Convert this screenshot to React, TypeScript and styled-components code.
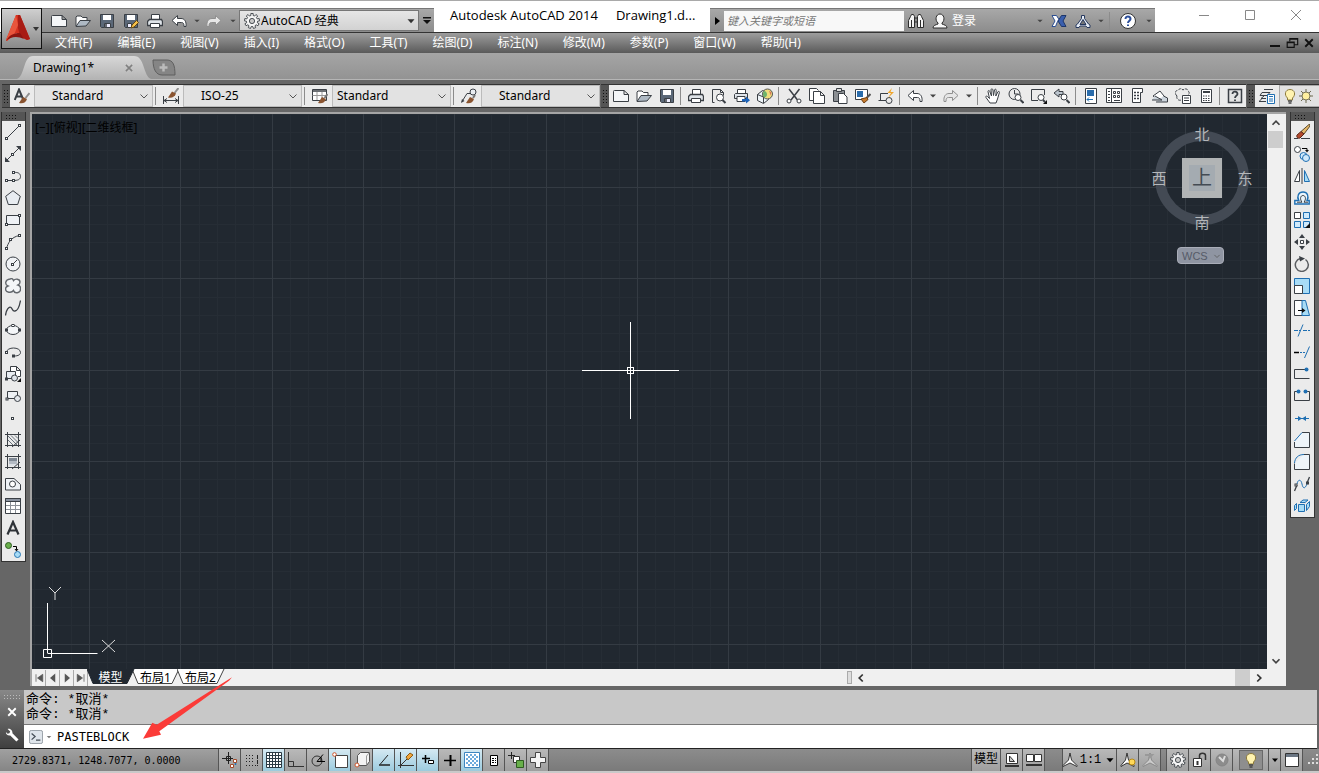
import React from 'react';
import styled, { createGlobalStyle, css } from 'styled-components';

const ui = '"Noto Sans", "Noto Sans CJK SC", sans-serif';
const mono = '"Liberation Mono", "Noto Sans CJK SC", monospace';

const GlobalStyle = createGlobalStyle`
  * { box-sizing: border-box; }
  body { margin: 0; background: #666; font: 12px/16px ${ui}; color: #000; overflow: hidden; }
  button, select, input { font: inherit; color: inherit; margin: 0; padding: 0; border: 0; background: none; border-radius: 0; }
  svg { display: block; flex: none; }
`;

/* ---------- glyphs ---------- */

const K = '#3a3f45';
const B = '#1f6fb2';

const Sq = ({ x, y, c = K }: { x: number; y: number; c?: string }) => (
  <rect x={x - 1} y={y - 1} width="2" height="2" fill="#fff" stroke={c} />
);

const undoPath = 'M6.5 2.500L1 7.500l5.500 5V9.500h4c1.800 0 2.500 1 2.500 4h2c.6-5-1.500-8-5-8H6.500z';
const redoPath = 'M9.500 2.500L15 7.500l-5.500 5V9.500h-4C3.700 9.500 3 10.500 3 13.500H1c-.6-5 1.500-8 5-8h3.500z';

/* Outline of a cog: each tooth contributes two outer and two inner points. */
const gearPoints = Array.from({ length: 9 }, (_, i) => {
  const step = (Math.PI * 2) / 9;
  return [[-0.22, 7.6], [0.22, 7.6], [0.3, 5.6], [0.7, 5.6]]
    .map(([t, r]) => {
      const a = (i + t) * step - Math.PI / 2;
      return `${(8 + r * Math.cos(a)).toFixed(2)},${(8 + r * Math.sin(a)).toFixed(2)}`;
    })
    .join(' ');
}).join(' ');

const glyphs: Record<string, React.ReactNode> = {
  new: <path d="M.5 3.500c0-1 .5-1 1-1H11l4.500 4v7H.5zM11 2.500v4h4.500" fill="#f4f6f8" stroke={K} />,
  open: <><path d="M1 13V4l1-1h4l1.500 1.500H12V7" fill="#fff" stroke={K} /><path d="M1 13.500L5 7.500h10.500L11 13z" fill="#aeb9c4" stroke={K} /></>,
  save: <><path d="M1.500 1.500h13v13h-12l-1-1z" fill="#5b6878" stroke={K} /><path d="M4 2h8v5H4z" fill="#fff" /><path d="M5.500 10.500h6v4h-6z" fill="#eef" stroke={K} /><path d="M7 11v3" stroke={K} strokeWidth="1.500" /></>,
  saveas: <><path d="M1.500 1.500h13v13h-12l-1-1z" fill="#5b6878" stroke={K} /><path d="M4 2h8v5H4z" fill="#fff" /><path d="M4.500 10.500h4v4h-4z" fill="#eef" stroke={K} /><path d="M8 15l1-3 4.500-4.500 2 2L11 14z" fill="#f5c04a" stroke="#6b4b12" /></>,
  print: <><path d="M4.500 6.500V1.500h8v5" fill="#fff" stroke={K} /><path d="M2.500 6.500h12l1 2v4h-15v-4z" fill="#dfe4e9" stroke={K} strokeWidth="1.300" /><path d="M3.500 10.500h9v4h-9z" fill="#fff" stroke={K} /></>,
  preview: <><path d="M3.500 14.500h-2v-13h8l3 3v3M9.500 1.500v3h3" fill="none" stroke={K} /><circle cx="9" cy="9.500" r="3.500" fill="#fff" stroke={K} /><path d="M11.500 12l3 3" stroke={K} strokeWidth="2" /></>,
  publish: <><path d="M3.500 5.500V1.500h8v4" fill="#fff" stroke={K} /><path d="M1.500 5.500h12v5h-13v-4z" fill="#dfe4e9" stroke={K} /><path d="M3 8.500h8v5H3z" fill="#fff" stroke={K} /><path d="M8 11h4V8.500l4 3.700-4 3.300V13.500H8z" fill="#1d63b8" /></>,
  dwf: <><path d="M.5 6.500l5-4 6 2v7l-5 4-6-3z" fill="#eef4f8" stroke={K} /><path d="M.5 6.500l6 2.500v6" fill="none" stroke={K} /><circle cx="10.500" cy="6" r="5" fill="#efdc7c" stroke="#555" /><path d="M7 3c2 0 3 2 3 3.500S9 9 7.500 9.500C5.500 8 5.500 5 7 3z" fill="#6db36c" /><path d="M12 2.500l2.500 2-1 3z" fill="#d9795a" /></>,
  cut: <><path d="M3 1l8.500 11M13.500 1L5 12" stroke={K} strokeWidth="1.500" /><circle cx="3" cy="13" r="2" fill="#fff" stroke={K} /><circle cx="13" cy="13" r="2" fill="#fff" stroke={K} /></>,
  copy: <><path d="M4 12.500H.5v-12h7l2 2" fill="#fff" stroke={K} /><path d="M4.500 3.500h7l4 4v8h-11zM11.500 3.500v4h4" fill="#fff" stroke={K} /></>,
  paste: <><path d="M1.500 2.500h11v11h-11z" fill="#8b8f93" stroke={K} /><path d="M4.500.500h5v3h-5z" fill="#ddd" stroke={K} /><path d="M6.500 5.500h5l3.500 3.500v6.500H6.500z" fill="#fff" stroke={K} /></>,
  match: <><path d="M.5 1.500h12v10H.5z" fill="#fff" stroke={K} /><path d="M2 3h6v6H2z" fill="#2a6cab" /><path d="M15.500 6l-4 4" stroke="#555" strokeWidth="2" /><path d="M6 11l6-1.500 1 2L9 15z" fill="#c67a2c" stroke="#6d3d10" /></>,
  blockedit: <><path d="M10 5.500H2.500v7H8M.5 12.500h4" fill="none" stroke={K} /><circle cx="11" cy="12.500" r="3" fill="none" stroke={K} /><path d="M14 0L9.500 5H13l-3 5 6-6h-3.500z" fill="#f0a52b" /></>,
  undo: <path d={undoPath} fill="#fff" stroke={K} />,
  redo: <path d={redoPath} fill="#e6e6e6" stroke="#8f8f8f" />,
  hand: <path d="M5 15L1 9.500c-.5-1.500.8-2 1.500-1l2 2L3 3.500c0-1.300 1.500-1.300 1.800 0L6.500 8 6 1.800C6 .5 7.700.5 7.900 1.800L8.500 7.500 9.500 2c.3-1.200 1.900-1 1.700.3L10.800 8l2-4c.6-1.200 2-.6 1.600.6L12.500 11l-1.500 4z" fill="#fff" stroke={K} />,
  zoomrt: <><circle cx="6.500" cy="6" r="5.500" fill="none" stroke={K} /><path d="M6.500 2v4h4" fill="none" stroke={K} /><circle cx="10" cy="9.500" r="3" fill="#fff" stroke={K} /><path d="M12.500 12l3 3" stroke={K} strokeWidth="2" /></>,
  zoomwin: <><path d="M7 12.500H.5v-11h13V7" fill="none" stroke={K} /><circle cx="10" cy="9.500" r="3" fill="#fff" stroke={K} /><path d="M12 12l2 2" stroke={K} strokeWidth="2" /><path d="M16 12v4h-4z" /></>,
  zoomprev: <><path d="M5 1L0 5l5 4V6.500h4v-3H5z" fill="#bcc5ce" stroke={K} /><circle cx="10" cy="9" r="3" fill="#fff" stroke={K} /><path d="M12.500 12l3 3" stroke={K} strokeWidth="2" /></>,
  props: <><path d="M2.500.500h11v15h-11z" fill="#fff" stroke={K} /><path d="M4 2h7v6H4z" fill="#2a6cab" /><path d="M4 11.500h6M6 9.500l-2 2 2 2" stroke={B} fill="none" /></>,
  dcenter: <><path d="M.5.500h15v14H.5zM5.500.500v14" fill="#fff" stroke={K} /><path d="M2 3.500h2M2 6.500h2M2 9.500h2M2 12.500h2" stroke={K} /><path d="M7.500 3.500h2v2h-2zM11.500 3.500h2v2h-2zM7.500 7.500h2v2h-2zM11.500 7.500h2v2h-2zM8 12.500h6" stroke={K} fill="none" /></>,
  palettes: <><path d="M3.500.500h10v4h-2v10h-8z" fill="#fff" stroke={K} /><path d="M5 4.500h5M5 7.500h5M5 10.500h5" stroke={K} strokeDasharray="2 1" strokeWidth="1.500" /></>,
  sheets: <><path d="M1 8l7-5 4 5 3 3H5z" fill="#fff" stroke={K} /><path d="M0 12h10l-7-4M4 14h11.500v-4l-4-2" fill="#ccd4dc" stroke={K} /></>,
  markup: <><path d="M2 8C-.5 6 0 2 3 2.500 5-.5 7 1 8 2c2-2 5-1 5 1 2 1 1 4 0 4M2 8c-1 3 2 5 4 4" fill="none" stroke={K} strokeDasharray="3 1" /><path d="M7.500 7.500h8v8h-8zM9 10h5M9 12.500h5" fill="#fff" stroke={K} /></>,
  calc: <><path d="M3.500 1.500h10v13h-10z" fill="#fff" stroke={K} /><path d="M5 4h7" stroke={K} strokeWidth="2" /><path d="M5 8h7M5 10.500h7M5 12.500h7" stroke={K} strokeDasharray="1.500 1" /></>,
  helpbox: <><path d="M1.500 1.500h13v13h-13z" fill="#e4e4e4" stroke={K} strokeWidth="1.500" /><path d="M5.500 6c0-3.500 5-3 5 0 0 1.500-2.500 2-2.500 4M8 11.500v1.500" fill="none" stroke={K} strokeWidth="1.800" /></>,
  layers: <><path d="M5 1.500h9M3 4.500h8L8 7.500H1zM2 10.500h5M0 13.500h7M2 10.500L5 8M0 13.500L2.500 11" fill="none" stroke={K} /><path d="M8.500 6.500h7v9h-7z" fill="#fff" stroke={B} /><path d="M10 8.500h4M10 11h4M10 13h4" stroke={B} /></>,
  bulb: <><path d="M5.500 10C2 7 3 1.500 8 1.500S14 7 10.500 10v2h-5z" fill="#fff3b0" stroke="#8c7a3a" /><path d="M6 13h4M6.500 15h3" stroke="#444" strokeWidth="1.500" /></>,
  sun: <><path d="M8 1v14M1 8h14M3 3l10 10M13 3L3 13" stroke="#6c6a50" /><circle cx="8" cy="8" r="4" fill="#fff0a0" stroke="#77745a" /></>,
  textstyle: <><path d="M.8 12L5 1.500 9 11M2.500 8.500h5" fill="none" stroke={K} strokeWidth="2" /><path d="M15.500 5l-4 5" stroke="#8f8f8f" strokeWidth="2" /><path d="M5 15l4-6 4 2c-1 3.500-4 5-8 4z" fill="#8a5430" /></>,
  dimstyle: <><path d="M.5 8v8M15.500 8v8M1 12.500h14M4 10.500l-3 2 3 2M12 10.500l3 2-3 2" stroke={K} fill="none" /><path d="M15.500 0l-4 5" stroke="#8f8f8f" strokeWidth="2" /><path d="M5 9.500l4-6 4 2c-1 3-4 5-8 4z" fill="#8a5430" /></>,
  tablestyle: <><path d="M.5 1.500h14v11H.5z" fill="#fff" stroke={K} /><path d="M.5 3h14" stroke={K} strokeWidth="1.500" /><path d="M.5 7.500h14M5 4v8M10 4v8" stroke="#999" /><path d="M15.500 6l-3 4" stroke="#777" strokeWidth="2" /><path d="M6 15l4-6 4 2c-1 3.500-4 5-8 4z" fill="#8a5430" /></>,
  mleader: <><path d="M1 13.500L6 5.500h3" stroke={K} fill="none" /><path d="M0 15l1-4 2.500 2z" fill={K} /><circle cx="12" cy="4" r="3" fill="#e9edf1" stroke={K} /><path d="M14 7l-2 3" stroke="#777" strokeWidth="2" /><path d="M5 15l4-6 4 2c-1 3.500-4 5-8 4z" fill="#8a5430" /></>,
  gear: <><polygon points={gearPoints} fill="#f5f5f5" stroke={K} strokeWidth=".9" /><circle cx="8" cy="8" r="2.600" fill="#c9c9c9" stroke={K} strokeWidth=".9" /></>,
  binoc: <><path d="M.5 14.500V7.500l2-4 1-2h2l1 2v11zM9.500 14.500v-11l1-2h2l1 2 2 4v7z" fill="#f4f4f4" stroke="#2c2c2c" /><path d="M6.500 5h3v4h-3z" fill="#888" stroke="#2c2c2c" /><path d="M3.500 7v7M12.500 7v7" stroke="#2c2c2c" /></>,
  user: <path d="M1 15c0-3 3-3 5-4v-1C2.500 7 4 1 8 1s5.500 6 2 9v1c2 1 5 1 5 4z" fill="#f7f7f7" stroke="#2c2c2c" />,
  exchange: <><path d="M1 2.500h4.500L8 6.500l-1.500 2-2 5H1L4 8z" fill="#fff" stroke="#2d4f92" /><path d="M15 2.500h-4.500L7 8l3.500 5.500H15L12 8z" fill="#3a5fae" stroke="#1d3669" /></>,
  a360: <><path d="M6.500 2.500h3v3l4 5.500 1.500 1v2.500h-3L11 13H5l-1 1.500H1V12l1.500-1 4-5.500z" fill="#e8eef7" stroke="#26385e" /><path d="M8 6.500L5 11.500h6z" fill="#777" stroke="#26385e" /></>,
  helpround: <><circle cx="8" cy="8" r="7.500" fill="#fff" stroke="#333" /><path d="M5.500 6c0-3.500 5-3 5 0 0 1.500-2.500 2-2.500 4M8 11.500v1.500" fill="none" stroke="#2c4f9b" strokeWidth="2" /></>,

  line: <><path d="M2 14L14 2" stroke={K} /><Sq x={1.5} y={14.5} /><Sq x={14.5} y={1.5} /></>,
  xline: <><path d="M1 15L15 1" stroke={K} /><path d="M0 16v-5l5 5zM16 0v5l-5-5z" fill={K} /><Sq x={7.5} y={8.5} /></>,
  pline: <><path d="M9 4.500c4-.5 6.500 1 6.500 4S13 12.500 8 12.500H2" fill="none" stroke={K} /><Sq x={1.5} y={12.5} /><Sq x={8.5} y={12.5} /><Sq x={8.5} y={4.5} /></>,
  polygon: <path d="M8 .7l7.300 5.600-2.600 8.200H3.300L.7 6.300z" fill="#e8ecf1" stroke={K} />,
  rect: <><path d="M1.500 3.500h13v9h-13z" fill="#eef1f5" stroke={K} /><Sq x={1.5} y={12.5} /><Sq x={14.5} y={3.5} /></>,
  arc: <><path d="M1.500 14.500C3 9 6 3 14.500 1.500" fill="none" stroke={K} /><Sq x={1.5} y={14.5} /><Sq x={5.5} y={5.5} /><Sq x={14.5} y={1.5} /></>,
  circle: <><circle cx="8" cy="8" r="7" fill="#f0f2f5" stroke={K} /><path d="M8 8l4-4" stroke={K} /><Sq x={7.5} y={8.5} /></>,
  cloud: <path d="M5 1c2-1 3 0 3.500 1.500C10 .5 15 .5 15 4c0 1.500-1 2.500-2 3 3.500 1 3.500 6.500 0 7.500-2.500.8-4-.5-4.500-2C6.500 15.500.5 14.500.5 11 .5 9.500 1.500 8.500 3 8-.5 6.500 0 1.500 5 1z" fill="#f4f6f8" stroke="#63676c" strokeWidth="1.400" />,
  spline: <path d="M.5 15.500C1 10 4 6 6 7.500s1 4 4 3.500 4.500-5 5.500-10.500" fill="none" stroke={K} strokeWidth="1.300" />,
  ellipse: <><ellipse cx="8" cy="8" rx="6.500" ry="4.500" fill="#f4f6f8" stroke={K} /><Sq x={1.5} y={8} /><Sq x={14.5} y={8} /><Sq x={8} y={3.5} /></>,
  earc: <><path d="M1.500 8.500c0-6 14-6 14 0 0 2-2 3.500-6.500 3.500" fill="none" stroke={K} /><Sq x={1.5} y={8.5} /><Sq x={8.5} y={12} /></>,
  insert: <><path d="M5.500 5V.500h6l4 4v6H13M11.500.500v4h4" fill="#fff" stroke={K} /><path d="M1.500 5.500h9v7h-9z" fill="#e8ecf1" stroke={K} /><circle cx="9.500" cy="12" r="3" fill="#dfe4ea" stroke={K} /><path d="M16 12v4h-4z" /><Sq x={1.5} y={13} /></>,
  block: <><path d="M2.500 3.500h10v7h-10z" fill="#eef1f5" stroke={K} /><circle cx="12.500" cy="10.500" r="3" fill="#e4e8ed" stroke={K} /><Sq x={2} y={11} /></>,
  point: <Sq x={7.5} y={8.5} />,
  hatch: <><path d="M2.500 0v15M13.500 0v15M0 2.500h16M0 13.500h16" stroke={K} /><path d="M3 4l9 9M6 3.500l7 7M3 8l5 5M10 3.500l3 3" stroke="#66707b" /><path d="M7 15l8-7" stroke={K} /></>,
  gradient: <><path d="M2.500 0v15M13.500 0v15M0 2.500h16M0 13.500h16" stroke={K} /><path d="M4 4h8v3H4z" fill="#7f8894" /><path d="M4 7h8v3H4z" fill="#b4bbc4" /><path d="M4 10h8v2H4z" fill="#dde1e6" /><path d="M7 15l8-7" stroke={K} /></>,
  region: <><path d="M.5 2.500H9l6.500 6v5.500H.5z" fill="#eef1f5" stroke={K} /><circle cx="7.500" cy="8" r="3" fill="#fff" stroke={K} /></>,
  table: <><path d="M.5.500h15v15H.5z" fill="#fff" stroke={K} /><path d="M.5.500h15v3H.5z" fill="#8b93a0" stroke={K} /><path d="M1 7.500h14M1 11.500h14M5.500 4v11M10.500 4v11" stroke="#8b9097" /></>,
  mtext: <path d="M2.500 14.500L8 2l5.500 12.500M4.500 10.500h7" fill="none" stroke="#2f3338" strokeWidth="2.200" />,
  addsel: <><circle cx="3.500" cy="3.500" r="3" fill="#6ab04c" stroke="#2f5d22" /><path d="M8 4.500h3.500V8" fill="none" stroke="#000" /><path d="M9.500 7h4l-2 2.500z" /><circle cx="12.500" cy="12.500" r="3" fill="#a8dcf6" stroke="#2a78b5" /></>,

  erase: <><path d="M0 14.500h4M7 14.500h9" stroke={K} /><path d="M15.500 0L7 7.500l3 2.500 6-8z" fill="#e7b96a" stroke="#5b4a2a" /><path d="M7 7.500l3 2.500-4 4c-2 1-4-1-3-3z" fill="#b4492d" stroke="#5b2a1c" /></>,
  copyobj: <><circle cx="3.500" cy="3.500" r="3" fill="#fff" stroke={K} /><path d="M8 2.500h5V5" fill="none" stroke="#000" /><path d="M11 4h4l-2 2.500z" /><circle cx="9.500" cy="10" r="3.500" fill="#cfe9fb" stroke={B} /><circle cx="12" cy="12" r="3.500" fill="#cfe9fb" stroke={B} /></>,
  mirror: <><path d="M5.500 2.500v11h-5z" fill="#fff" stroke={K} /><path d="M8 0v16" stroke={K} /><path d="M10.500 2.500v11h5z" fill="#a8dcf6" stroke={B} /></>,
  offset: <><path d="M.8 14V10.500h4C2.500 6.500 4.500 2 9 2s6.200 4.500 4 8.500h2.200V14z" fill="#eaf5fd" stroke={B} strokeWidth="1.400" /><path d="M3 12.200h5C5.500 9 6.500 5.500 9 5.500s3.500 3.500 1 6.700h4" fill="none" stroke={K} /></>,
  array: <><path d="M.5.500h6v6h-6z" fill="#fff" stroke={K} /><path d="M9.500.500h6v6h-6zM.5 9.500h6v6h-6zM9.500 9.500h6v6h-6z" fill="#cfe9fb" stroke={B} /><path d="M16 11v5h-5z" /></>,
  move: <><path d="M8 0l3 4H5zM8 16l3-4H5zM0 8l4-3v6zM16 8l-4-3v6z" fill={K} /><path d="M6.500 6.500h3v3h-3z" fill="#fff" stroke={K} /></>,
  rotate: <><path d="M6.500 2.500a6.500 6.500 0 1 0 5 1" fill="none" stroke="#5a5d61" strokeWidth="1.500" /><path d="M5 0l6 2.500-5 3z" fill={K} /></>,
  scale: <><path d="M.5.500h15v15h-7V8H.5z" fill="#a8dcf6" stroke={B} /><path d="M.5 7.500h8v8h-8z" fill="#fff" stroke={K} /></>,
  stretch: <><path d="M8 .5H.5v15H8" fill="#fff" stroke={K} /><path d="M8 .5h3.500l4 15H8z" fill="#a8dcf6" stroke={B} /><path d="M4 10.500h6" stroke="#000" /><path d="M8 8l3.500 2.500L8 13z" /></>,
  trim: <><path d="M0 8.500h6M9 8.500h7" stroke={B} strokeDasharray="4 1" /><path d="M4 14.500L9 2.500" stroke={B} /></>,
  extend: <><path d="M0 8.500h5" stroke="#000" strokeWidth="1.500" /><path d="M6 8.500h5" stroke={B} strokeDasharray="2 1" /><path d="M10.500 14L15.500 2.500" stroke={B} /></>,
  breakpt: <><path d="M12 3.500H.5v9h15" fill="none" stroke={K} /><circle cx="12.500" cy="3.500" r="2" fill={B} /></>,
  brk: <><path d="M4 3.500H.5v9h15v-9H12" fill="none" stroke={K} /><circle cx="4.500" cy="3.500" r="2" fill={B} /><circle cx="11.500" cy="3.500" r="2" fill={B} /></>,
  join: <><path d="M1 8.500h14" stroke={B} /><path d="M4 6l4 2.500L4 11zM12 6L8 8.500l4 2.500z" fill={B} /></>,
  chamfer: <><path d="M8 .5h7.500v15H.5V10" fill="#eef4f9" stroke={K} /><path d="M.5 9L8 .5" stroke={B} /></>,
  fillet: <><path d="M10 .5h5.500v15H.5v-6" fill="#eef4f9" stroke={K} /><path d="M.5 9C1 4 4 .5 10 .5" fill="none" stroke={B} /></>,
  blend: <><path d="M.5 15L3 9M13 7l2.500-6" stroke={K} strokeWidth="1.300" /><path d="M3 8c1-5 4-5 5 0s3 5 5 0" fill="none" stroke={B} /><Sq x={2} y={9} /><Sq x={13.5} y={7} /></>,
  explode: <><path d="M4.500 6.500h6v7h-6zM.5 7.500l2-2v5l-2 2zM6 4.500l3-2.500h5l-3 2.500zM12.500 6.500l3-3v5l-3 4z" fill="#a8dcf6" stroke={B} /></>,

  infer: <><path d="M0 6.500h11M6.500 0v12" stroke="#202020" /><path d="M4.500 4.500h4v4h-4z" fill="none" stroke="#202020" /><path d="M13.500 8v5M9 14.500h2" stroke={B} strokeWidth="1.500" /><path d="M11.500 7.500h3v3h-3zM8.500 12.500h3v3h-3z" fill="#fff" stroke="#a34a2a" /></>,
  snap: <><path d="M2 3.500h9M2 6.500h9M2 9.500h9M2 13.500h10" stroke="#222" strokeDasharray="1 2" /><path d="M13.500 3v11" stroke="#222" strokeDasharray="4 1" /></>,
  grid: <path d="M.5.500h15v15H.5zM3.500 0v16M6.500 0v16M9.500 0v16M12.500 0v16M0 3.500h16M0 6.500h16M0 9.500h16M0 12.500h16" fill="#fff" stroke="#2a3a44" />,
  ortho: <path d="M.5 0v14.500H16M.5 9.500h5v5" fill="none" stroke="#333" />,
  polar: <><circle cx="7" cy="9" r="5" fill="none" stroke="#333" /><path d="M7 9.500h8M7 9.500l6-7M11 5v4.500" fill="none" stroke="#000" /></>,
  osnap: <><path d="M3.500 3.500h12v12h-12z" fill="#fff" stroke="#444" /><circle cx="2.500" cy="2.500" r="1.800" fill="#fff" stroke="#d0562c" /></>,
  osnap3: <><path d="M3.500 3.500l3-3h9v9l-3 4h-9z" fill="#f4f4f4" stroke="#555" /><path d="M12.500 13V4l3-3.500" fill="none" stroke="#999" /><circle cx="3" cy="13" r="2" fill="#fff" stroke="#d0562c" /></>,
  otrack: <><path d="M12 3L4 12.500" stroke="#222" /><path d="M3 13h11" stroke="#222" strokeWidth="1.500" /></>,
  ducs: <><path d="M2.500 0v16M0 13.500h16M2.500 13.500L10 6" stroke="#333" fill="none" /><path d="M8 5l4-4 3 2-5 5z" fill="#f3a53a" stroke="#8c5a10" /></>,
  dyn: <><path d="M2 6.500h8M5.500 3v8" stroke="#000" strokeWidth="1.500" /><path d="M8.500 8.500h5v3h-5z" fill="#fff" stroke="#000" /></>,
  lwt: <><path d="M2 8.500h12" stroke="#000" strokeWidth="1.500" /><path d="M8.500 3v11" stroke="#000" strokeWidth="2" /></>,
  tpy: <><path d="M.5.500h15v15H.5z" fill="#fff" stroke="#3d86c0" /><path d="M2 3h12M2 7h12M2 11h12" stroke="#6dabdc" strokeWidth="2" strokeDasharray="2 2" /><path d="M4 5h10M4 9h10M4 13h10" stroke="#6dabdc" strokeWidth="2" strokeDasharray="2 2" /></>,
  qp: <><path d="M4.500 3.500h7v10h-7z" fill="#fff" stroke="#000" /><path d="M6 6.500h4M6 8.500h4M6 10.500h4" stroke="#000" strokeDasharray="2 1" /></>,
  sc: <><path d="M0 3.500h7M3.500 0v7" stroke="#222" /><path d="M5.500 4.500h6v6h-6z" fill="#fff" stroke="#333" /><path d="M8.500 8.500h7v7h-7z" fill="#68b04a" stroke="#2e5d20" /></>,
  am: <path d="M5.500.500h5v5h5v5h-5v5h-5v-5h-5v-5h5z" fill="#f4f4f4" stroke="#444" />,
  paper: <><path d="M2.500 1.500h11v10h-11z" fill="#fff" stroke="#333" /><path d="M5.500 4v5.500h5z" fill="#ccc" stroke="#333" /><path d="M1 14h14" stroke="#333" strokeWidth="2" /></>,
  qview: <><path d="M.5 2.500h7v7h-7zM8.500 2.500h7v7h-7z" fill="#fff" stroke="#333" /><path d="M0 13h16" stroke="#333" strokeWidth="2" /></>,
  anno: <path d="M8 1l1.500 7 5.500 5.500v1L8 11l-7 3.500v-1L6.500 8z" fill="#fff" stroke="#333" />,
  annovis: <><path d="M7 1l1.500 7 5.500 5.500v1L7 11l-6 3.500v-1L5.500 8z" fill="#fff" stroke="#333" /><circle cx="12" cy="10" r="3" fill="#ffd95a" stroke="#b98a14" /></>,
  annoauto: <><path d="M8 1l1.500 7 5.500 5.500v1L8 11l-7 3.500v-1L6.500 8z" fill="#ccc" stroke="#888" /><path d="M3 3h7l-3 3" fill="none" stroke="#999" strokeWidth="2" /></>,
  lock: <><path d="M1.500 6.500h8v8h-8z" fill="#fff" stroke="#333" /><path d="M7.500 6V3.500c0-3 6-3 6 0V8" fill="none" stroke="#333" strokeWidth="1.500" /><path d="M5.500 9v4" stroke="#333" strokeWidth="2" /></>,
  hw: <><circle cx="8" cy="8" r="6" fill="#8c8c8c" stroke="#858585" /><path d="M5 5l4 4 2-5" stroke="#ddd" strokeWidth="2" fill="none" /></>,
  clean: <><path d="M1.500 1.500h13v13h-13z" fill="#fff" stroke="#333" /><path d="M2 2h12v3H2z" fill="#6b7683" /></>,
  resize: <path d="M14 5v11M10 9v7M6 13v3" stroke="#ddd" strokeWidth="2" strokeDasharray="2 2" />,
  wrench: <path d="M3 1l3 3-1 2-2 .5L1 4.500C1 7 3 9 6 8.500l7 7 2.500-2.500-7-7C9 3 6 0 3 1z" fill="#fff" />,
  prompt: <><rect x=".5" y=".5" width="15" height="15" rx="2" fill="#dfe5eb" stroke="#8b939b" /><path d="M3 4l4 3.500L3 11M8 11.500h5" fill="none" stroke="#444c55" strokeWidth="1.400" /></>,
  close: <path d="M3 3l10 10M13 3L3 13" stroke="currentColor" strokeWidth="2.500" fill="none" />,
  thinclose: <path d="M3 3l10 10M13 3L3 13" stroke="currentColor" fill="none" />,
  square: <path d="M3.500 3.500h9v9h-9z" stroke="currentColor" fill="none" />,
  dash: <path d="M3 8.500h10" stroke="currentColor" fill="none" />,
  mindoc: <path d="M3 11h10" stroke="currentColor" strokeWidth="2" fill="none" />,
  restore: <path d="M5.500 6V3h9v7H11M2.500 7h8v6h-8zM2 7.500h9M5 3.500h10" stroke="currentColor" strokeWidth="1.300" fill="none" />,
  up: <path d="M4 10l4-4 4 4" stroke="#444" strokeWidth="2" fill="none" />,
  down: <path d="M4 6l4 4 4-4" stroke="#444" strokeWidth="2" fill="none" />,
  left: <path d="M10 4L6 8l4 4" stroke="#333" strokeWidth="2" fill="none" />,
  right: <path d="M6 4l4 4-4 4" stroke="#333" strokeWidth="2" fill="none" />,
  chev: <path d="M4.500 6.500L8 10l3.500-3.500" stroke="#555" fill="none" />,
  caret: <path d="M4 6h8l-4 4.500z" fill="currentColor" />,
  smallcaret: <path d="M5 6.500h6L8 9.500z" fill="currentColor" />,
  play: <path d="M6 4l5 4-5 4z" fill="#000" />,
  barcaret: <path d="M4 4h8v1.500H4zM4 7h8l-4 4z" fill="#111" />,
  first: <path d="M4 3v10M13 3v10L6 8z" stroke="#555" fill="#555" />,
  prev: <path d="M11 2v12L4 8z" fill="#555" />,
  next: <path d="M5 2v12l7-6z" fill="#555" />,
  last: <path d="M3 3v10l7-5zM12 3v10" stroke="#555" fill="#555" />,
};

const Glyph = ({ name, size = 16 }: { name: string; size?: number }) => (
  <svg width={size} height={size} viewBox="0 0 16 16" fill="#111" aria-hidden="true">{glyphs[name]}</svg>
);

/* ---------- frame ---------- */

const Window = styled.div`
  position: relative;
  display: flex;
  flex-direction: column;
  min-height: 100vh;
  background: #666;
  border-top: 1px solid #a9a9a9;
  overflow: hidden;
`;

const Header = styled.header`
  position: relative;
  background: #fff;
`;

const AppButton = styled.button`
  position: absolute;
  left: 1px;
  top: 7px;
  width: 41px;
  height: 41px;
  display: flex;
  align-items: center;
  border: 1px solid #111;
  background: linear-gradient(#cfcfcf, #8a8a8a);
`;

const TitleRow = styled.div`
  display: flex;
  align-items: stretch;
  height: 31px;
  padding-left: 42px;
`;

const Panel = styled.div`
  display: flex;
  align-items: center;
  height: 24px;
  margin-top: 7px;
  background: linear-gradient(#a8a8a8, #8c8c8c);
  border-top: 1px solid #777;
`;

const QuickTools = styled(Panel)`
  padding-left: 5px;
`;

const IconButton = styled.button<{ $w?: number }>`
  display: flex;
  align-items: center;
  justify-content: center;
  flex: none;
  width: ${p => p.$w ?? 24}px;
  height: 22px;
  color: #444;
`;

const Workspace = styled.label`
  display: flex;
  align-items: center;
  gap: 1px;
  width: 180px;
  height: 21px;
  padding-left: 4px;
  background: linear-gradient(#e6e6e6, #d2d2d2);
  border: 1px solid #777;
  color: #333;
`;

const Picker = styled.select`
  appearance: none;
  flex: 1;
  min-width: 0;
  height: 100%;
  color: #000;
  outline: 0;
`;

const LayerPicker = styled(Picker)`
  padding-left: 8px;
`;

const Title = styled.h1`
  display: flex;
  flex: 0 1 276px;
  gap: 18px;
  margin: 0;
  padding: 5px 0 0 16px;
  font: 400 13px/18px "Open Sans", "Noto Sans CJK SC", sans-serif;
  white-space: nowrap;
`;

const Search = styled.input`
  width: 180px;
  height: 20px;
  padding-left: 3px;
  background: #f8f8f8;
  font-size: 11px;
  &::placeholder { font-style: italic; color: #777; opacity: 1; }
`;

const Login = styled.button`
  width: 81px;
  color: #fff;
  text-align: left;
`;

const WindowButtons = styled.div`
  display: flex;
  margin-left: auto;
  padding-top: 3px;
`;

const WindowButton = styled(IconButton)`
  width: 46px;
  color: #888;
`;

const MenuBar = styled.nav`
  display: flex;
  align-items: center;
  height: 21px;
  padding: 0 2px 0 55px;
  border-top: 1px solid #333;
  background: linear-gradient(#9d9d9d, #5a5a5a);
`;

const MenuItem = styled.button`
  color: #fff;
  margin-right: 25px;
  white-space: nowrap;
`;

const DocButtons = styled.div`
  display: flex;
  margin-left: auto;
`;

const DocButton = styled(IconButton)`
  width: 17px;
  color: #111;
`;

const FileTabs = styled.div`
  display: flex;
  align-items: flex-end;
  height: 27px;
  padding-left: 17px;
  border-bottom: 1px solid #b5b5b5;
  background: linear-gradient(#a5a5a5, #939393);
`;

const FileTab = styled.div`
  display: flex;
  align-items: center;
  justify-content: space-between;
  width: 134px;
  height: 23px;
  padding: 0 14px 0 16px;
  background: linear-gradient(#d8d8d8, #b4b4b4);
  clip-path: path('M0 23C8 20 6 0 16 0H117C128 0 126 20 134 23Z');
`;

const TabClose = styled(IconButton)`
  width: 16px;
  color: #808080;
`;

/* ---------- toolbars ---------- */

const ToolbarRow = styled.div`
  display: flex;
  align-items: center;
  gap: 1px;
  height: 32px;
  padding-left: 2px;
  overflow: hidden;
`;

const Toolbar = styled.div`
  display: flex;
  align-items: center;
  flex: none;
  height: 24px;
  background: #ebebeb;
  border-top: 1px solid #333;
  border-bottom: 1px solid #333;
`;

const dots = css`
  background-color: #555;
  background-image: radial-gradient(#111 1px, transparent 1px);
  background-size: 3px 3px;
`;

const Grip = styled.div`
  flex: none;
  width: 8px;
  height: 22px;
  border: solid #555;
  border-width: 4px 1px;
  ${dots}
`;

const Separator = styled.span`
  flex: none;
  width: 1px;
  height: 18px;
  margin: 0 3px 0 2px;
  background: #8c8c8c;
`;

const StyleField = styled.label<{ $indent: number }>`
  display: flex;
  align-items: center;
  width: 119px;
  height: 22px;
  padding-left: ${p => p.$indent}px;
  border: 1px solid #bbb;
  background: #e2e2e2;
`;

const StyleIcon = styled.span`
  display: flex;
  justify-content: center;
  width: 24px;
`;

const LayerField = styled.label`
  display: flex;
  align-items: center;
  width: 160px;
  height: 22px;
  padding-left: 2px;
  border: 1px solid #aaa;
  background: #e2e2e2;
`;

const Main = styled.main`
  display: flex;
  flex: 1;
  align-items: flex-start;
  padding: 0 4px 4px 1px;
`;

const SideTools = styled.div`
  flex: none;
  width: 25px;
  background: #ebebeb;
  border: 1px solid #333;
  border-top: 0;
`;

const SideGrip = styled.div`
  height: 9px;
  border: solid #555;
  border-width: 2px 8px 2px 3px;
  ${dots}
`;

const SideButton = styled(IconButton)`
  width: 22px;
`;

/* ---------- drawing area ---------- */

const Viewport = styled.section`
  display: flex;
  flex-direction: column;
  align-self: stretch;
  flex: 1;
  min-width: 0;
  margin: 0 4px;
  border: solid #a5a5a5;
  border-width: 2px 0 0 2px;
  background: #f0f0f0;
`;

const ViewRow = styled.div`
  display: flex;
  flex: 1;
`;

const Canvas = styled.div`
  position: relative;
  flex: 1;
  min-height: 400px;
  background: #212830;
  overflow: hidden;
`;

const GridLayer = styled.svg`
  position: absolute;
  inset: 0;
  width: 100%;
  height: 100%;
`;

const ViewLabel = styled.span`
  position: absolute;
  left: 3px;
  top: 6px;
  color: #000;
`;

const Crosshair = styled.svg`
  position: absolute;
  left: 550px;
  top: 208px;
`;

const UcsIcon = styled.svg`
  position: absolute;
  left: 10px;
  bottom: 6px;
`;

const Compass = styled.div`
  position: absolute;
  right: 11px;
  top: 10px;
  display: grid;
  grid-template: 20px 68px 20px / 22px 64px 22px;
  place-items: center;
  color: #b4b7ba;
  font-size: 15px;
  line-height: 18px;
`;

const Ring = styled.div`
  position: absolute;
  left: 7px;
  top: 7px;
  width: 94px;
  height: 94px;
  border: 10px solid #434a54;
  border-radius: 50%;
`;

const Point = styled.span<{ $col: number; $row: number }>`
  position: relative;
  grid-column: ${p => p.$col};
  grid-row: ${p => p.$row};
`;

const CubeFace = styled.button`
  position: relative;
  grid-column: 2;
  grid-row: 2;
  width: 40px;
  height: 40px;
  border: 7px solid #b1b4b5;
  background: #a4abb1;
  color: #444b53;
  font-size: 20px;
  line-height: 24px;
`;

const Wcs = styled.button`
  position: absolute;
  right: 43px;
  top: 133px;
  display: flex;
  align-items: center;
  justify-content: space-between;
  width: 47px;
  height: 17px;
  padding-left: 4px;
  border: 1px solid #a9adb8;
  border-radius: 4px;
  background: #8f95a2;
  color: #565b68;
  font: 11px/14px "Liberation Sans", sans-serif;
`;

const VScroll = styled.div`
  display: flex;
  flex-direction: column;
  align-items: center;
  width: 17px;
  margin-right: 2px;
`;

const ScrollButton = styled(IconButton)`
  width: 17px;
  height: 17px;
`;

const Thumb = styled.div`
  width: 15px;
  height: 17px;
  background: #cdcdcd;
`;

const Spacer = styled.div`
  flex: 1;
`;

const LayoutBar = styled.div`
  display: flex;
  align-items: center;
  height: 17px;
`;

const NavButton = styled(IconButton)`
  width: 14px;
  height: 16px;
  border-right: 1px solid #aaa;
`;

const LayoutTabs = styled.div`
  display: flex;
`;

const LayoutTab = styled.button<{ $on?: boolean }>`
  position: relative;
  z-index: ${p => (p.$on ? 1 : 0)};
  width: 45px;
  height: 17px;
  line-height: 15px;
  color: ${p => (p.$on ? '#fff' : '#000')};
`;

const TabShape = styled.svg`
  position: absolute;
  left: -1px;
  top: 0;
`;

const TabText = styled.span`
  position: relative;
`;

const HScroll = styled.div`
  display: flex;
  align-items: center;
  flex: 0 1 420px;
  margin: 0 19px 0 auto;
`;

const Splitter = styled.div`
  width: 5px;
  height: 13px;
  border: 1px solid #aaa;
  background: #ddd;
`;

/* ---------- command line ---------- */

const Command = styled.section`
  display: flex;
  height: 59px;
  margin-right: 2px;
  border-bottom: 1px solid #222;
`;

const CommandSide = styled.div`
  display: flex;
  flex-direction: column;
  align-items: center;
  width: 24px;
  background: linear-gradient(#888, #3f3f3f);
`;

const CommandGrip = styled.div`
  width: 18px;
  height: 6px;
  margin: 4px 0 0;
  background: radial-gradient(#bbb 1px, transparent 1px) 0 0 / 3px 3px;
`;

const CommandButton = styled(IconButton)`
  height: 23px;
  color: #fff;
`;

const CommandBody = styled.div`
  flex: 1;
  background: #fff;
`;

const History = styled.div`
  height: 35px;
  padding: 2px;
  border-bottom: 1px solid #777;
  background: #c8c8c8;
  font: 13px/15px ${mono};
  white-space: pre;
`;

const Prompt = styled.label`
  display: flex;
  align-items: center;
  height: 23px;
  padding-left: 5px;
  color: #777;
`;

const PromptInput = styled.input`
  flex: 1;
  padding-left: 2px;
  color: #000;
  font: 12px/16px "DejaVu Sans Mono", monospace;
  outline: 0;
`;

/* ---------- status bar ---------- */

const StatusBar = styled.footer`
  display: flex;
  height: 24px;
  border-bottom: 2px solid #c9c9c9;
  background: linear-gradient(#8c8c8c, #7a7a7a);
`;

const Coordinates = styled.output`
  width: 218px;
  padding-left: 12px;
  background: linear-gradient(#a0a0a0, #858585);
  font: 10px/24px "DejaVu Sans Mono", monospace;
`;

const Toggle = styled.button<{ $on?: boolean; $w?: number }>`
  display: flex;
  align-items: center;
  justify-content: center;
  flex: none;
  gap: 2px;
  width: ${p => p.$w ?? 22}px;
  border-left: 1px solid #555;
  background: ${p => (p.$on ? 'linear-gradient(#d5e9f2, #9ccbde)' : 'linear-gradient(#b9b9b9, #9e9e9e)')};
  color: #000;
  font: 12px/20px ${mono};
`;

const Pressed = styled.span`
  display: flex;
  justify-content: center;
  width: 24px;
  padding: 1px 0;
  border: 1px solid #6a6a6a;
  background: #8e8e8e;
`;

const Gap = styled.span<{ $w: number }>`
  flex: none;
  width: ${p => p.$w}px;
  border-left: 1px solid #555;
`;

const StatusRight = styled.div`
  display: flex;
  margin-left: auto;
`;

const RedArrow = styled.svg`
  position: absolute;
  left: 142px;
  bottom: 32px;
  pointer-events: none;
`;

/* ---------- data ---------- */

const menus = ['文件(F)', '编辑(E)', '视图(V)', '插入(I)', '格式(O)', '工具(T)', '绘图(D)', '标注(N)', '修改(M)', '参数(P)', '窗口(W)', '帮助(H)'];

const styleFields = [
  { icon: 'textstyle', value: 'Standard', indent: 17, name: '文字样式' },
  { icon: 'dimstyle', value: 'ISO-25', indent: 17, name: '标注样式' },
  { icon: 'tablestyle', value: 'Standard', indent: 4, name: '表格样式' },
  { icon: 'mleader', value: 'Standard', indent: 17, name: '多重引线样式' },
];

const standardTools = [
  ['new', 'open', 'save'],
  ['print', 'preview', 'publish', 'dwf'],
  ['cut', 'copy', 'paste', 'match', 'blockedit'],
  ['undo', 'caret', 'redo', 'caret'],
  ['hand', 'zoomrt', 'zoomwin', 'zoomprev'],
  ['props', 'dcenter', 'palettes', 'sheets', 'markup', 'calc'],
  ['helpbox'],
];

const drawTools = ['line', 'xline', 'pline', 'polygon', 'rect', 'arc', 'circle', 'cloud', 'spline', 'ellipse', 'earc', 'insert', 'block', 'point', 'hatch', 'gradient', 'region', 'table', 'mtext', 'addsel'];
const modifyTools = ['erase', 'copyobj', 'mirror', 'offset', 'array', 'move', 'rotate', 'scale', 'stretch', 'trim', 'extend', 'breakpt', 'brk', 'join', 'chamfer', 'fillet', 'blend', 'explode'];

const toggles: [string, boolean][] = [
  ['infer', false], ['snap', false], ['grid', true], ['ortho', false], ['polar', false],
  ['osnap', true], ['osnap3', false], ['otrack', true], ['ducs', true], ['dyn', true],
  ['lwt', false], ['tpy', true], ['qp', false], ['sc', false], ['am', false],
];

const MINOR = 18.27;

const GridLines = () => (
  <GridLayer aria-hidden="true" shapeRendering="crispEdges">
    {[false, true].map(major => (
      <g key={String(major)} stroke={major ? '#343b43' : '#262d35'}>
        {Array.from({ length: 220 }, (_, i) => i).filter(i => (i % 5 === 0) === major).map(i => {
          const x = Math.round(57 + (i - 5) * MINOR) + 0.5;
          const y = Math.round(73 + (i - 5) * MINOR) + 0.5;
          return (
            <React.Fragment key={i}>
              <line x1={x} x2={x} y1="0" y2="100%" />
              <line x1="0" x2="100%" y1={y} y2={y} />
            </React.Fragment>
          );
        })}
      </g>
    ))}
  </GridLayer>
);

const SideToolbar = ({ tools, label }: { tools: string[]; label: string }) => (
  <SideTools role="toolbar" aria-label={label}>
    <SideGrip />
    {tools.map(t => <SideButton key={t} aria-label={t}><Glyph name={t} /></SideButton>)}
  </SideTools>
);

export default function App() {
  return (
    <Window>
      <GlobalStyle />
      <Header>
        <TitleRow>
          <QuickTools>
            {['new', 'open', 'save', 'saveas', 'print', 'undo'].map(t => (
              <IconButton key={t} aria-label={t}><Glyph name={t} /></IconButton>
            ))}
            <IconButton $w={11} aria-label="undo list"><Glyph name="smallcaret" size={14} /></IconButton>
            <IconButton aria-label="redo"><Glyph name="redo" /></IconButton>
            <IconButton $w={13} aria-label="redo list"><Glyph name="smallcaret" size={14} /></IconButton>
            <Workspace>
              <Glyph name="gear" />
              <Picker aria-label="工作空间"><option>AutoCAD 经典</option></Picker>
              <Glyph name="caret" size={14} />
            </Workspace>
            <IconButton $w={15} aria-label="自定义"><Glyph name="barcaret" /></IconButton>
          </QuickTools>
          <Title><span>Autodesk AutoCAD 2014</span><span>Drawing1.d...</span></Title>
          <Panel>
            <IconButton $w={14} aria-label="展开"><Glyph name="play" /></IconButton>
            <Search aria-label="搜索" placeholder="键入关键字或短语" />
            <IconButton aria-label="搜索"><Glyph name="binoc" /></IconButton>
            <IconButton aria-label="用户"><Glyph name="user" /></IconButton>
            <Login>登录</Login>
            <IconButton $w={14} aria-label="登录选项"><Glyph name="smallcaret" size={14} /></IconButton>
            <IconButton aria-label="Exchange"><Glyph name="exchange" /></IconButton>
            <IconButton aria-label="360"><Glyph name="a360" /></IconButton>
            <IconButton $w={12} aria-label="360 选项"><Glyph name="smallcaret" size={14} /></IconButton>
            <Separator />
            <IconButton $w={30} aria-label="帮助"><Glyph name="helpround" /></IconButton>
            <IconButton $w={12} aria-label="帮助选项"><Glyph name="smallcaret" size={14} /></IconButton>
          </Panel>
          <WindowButtons>
            <WindowButton aria-label="最小化"><Glyph name="dash" /></WindowButton>
            <WindowButton aria-label="最大化"><Glyph name="square" /></WindowButton>
            <WindowButton aria-label="关闭"><Glyph name="thinclose" /></WindowButton>
          </WindowButtons>
        </TitleRow>
        <MenuBar>
          {menus.map(m => <MenuItem key={m}>{m}</MenuItem>)}
          <DocButtons>
            <DocButton aria-label="最小化图形"><Glyph name="mindoc" /></DocButton>
            <DocButton aria-label="还原图形"><Glyph name="restore" size={14} /></DocButton>
            <DocButton aria-label="关闭图形"><Glyph name="close" size={12} /></DocButton>
          </DocButtons>
        </MenuBar>
        <AppButton aria-label="应用程序菜单">
          <svg width="30" height="32" viewBox="0 0 30 32">
            <path d="M14 2h4l10 24-3 1-6-3-4-4-4 2-6 6-1-1z" fill="#d4301f" />
            <path d="M14 2L4 27l1 1 7-6 4-10z" fill="#e8553c" />
            <path d="M18 2l10 24-3 1-7-4-2-8V2z" fill="#a81c14" />
            <path d="M4 28c3-6 8-8 14-8l4 6c-6-3-13-3-18 2z" fill="#8e1510" />
          </svg>
          <svg width="8" height="6" viewBox="0 0 8 6"><path d="M1 1h6L4 5z" fill="#333" /></svg>
        </AppButton>
      </Header>

      <FileTabs>
        <FileTab>
          <span>Drawing1*</span>
          <TabClose aria-label="关闭标签"><Glyph name="close" size={10} /></TabClose>
        </FileTab>
        <IconButton $w={26} aria-label="新建标签">
          <svg width="24" height="18" viewBox="0 0 24 18">
            <path d="M1 1h14c6 0 8 5 8 15H10C4 16 1 10 1 1z" fill="#858585" stroke="#5f5f5f" />
            <path d="M11.500 4.500v8M7.500 8.500h8" stroke="#bbb" strokeWidth="2.500" />
          </svg>
        </IconButton>
      </FileTabs>

      <ToolbarRow>
        <Toolbar role="toolbar" aria-label="样式">
          <Grip />
          {styleFields.map((f, i) => (
            <React.Fragment key={f.name}>
              {i > 0 && <Separator />}
              <StyleIcon><Glyph name={f.icon} /></StyleIcon>
              <StyleField $indent={f.indent}>
                <Picker aria-label={f.name}><option>{f.value}</option></Picker>
                <Glyph name="chev" />
              </StyleField>
            </React.Fragment>
          ))}
        </Toolbar>
        <Toolbar role="toolbar" aria-label="标准">
          <Grip />
          {standardTools.map((group, g) => (
            <React.Fragment key={g}>
              {g > 0 && <Separator />}
              {group.map((t, i) => (
                <IconButton key={i} $w={t === 'caret' ? 13 : 23} aria-label={t}>
                  <Glyph name={t === 'caret' ? 'smallcaret' : t} />
                </IconButton>
              ))}
            </React.Fragment>
          ))}
        </Toolbar>
        <Toolbar role="toolbar" aria-label="图层">
          <Grip />
          <StyleIcon><Glyph name="layers" /></StyleIcon>
          <LayerField>
            <Glyph name="bulb" />
            <Glyph name="sun" />
            <LayerPicker aria-label="图层"><option>0</option></LayerPicker>
          </LayerField>
        </Toolbar>
      </ToolbarRow>

      <Main>
        <SideToolbar tools={drawTools} label="绘图" />
        <Viewport>
          <ViewRow>
            <Canvas>
              <GridLines />
              <ViewLabel>[−][俯视][二维线框]</ViewLabel>
              <Crosshair width="98" height="98" viewBox="0 0 98 98" shapeRendering="crispEdges">
                <path d="M48.500 0v97M0 48.500h97M45.500 45.500h6v6h-6z" fill="none" stroke="#fff" />
              </Crosshair>
              <UcsIcon width="76" height="76" viewBox="0 0 76 76">
                <path d="M5.500 16v50M5.500 66.500h50M1.500 62.500h8v8h-8z" fill="none" stroke="#fff" />
                <path d="M7 0l6 6 6-6M13 6v7M60 53l13 12M73 53L60 65" fill="none" stroke="#ddd" />
              </UcsIcon>
              <Compass>
                <Ring />
                <Point $col={2} $row={1}>北</Point>
                <Point $col={1} $row={2}>西</Point>
                <CubeFace>上</CubeFace>
                <Point $col={3} $row={2}>东</Point>
                <Point $col={2} $row={3}>南</Point>
              </Compass>
              <Wcs>WCS<Glyph name="chev" size={12} /></Wcs>
            </Canvas>
            <VScroll>
              <ScrollButton aria-label="向上"><Glyph name="up" size={14} /></ScrollButton>
              <Thumb />
              <Spacer />
              <ScrollButton aria-label="向下"><Glyph name="down" size={14} /></ScrollButton>
            </VScroll>
          </ViewRow>
          <LayoutBar>
            {['first', 'prev', 'next', 'last'].map(n => (
              <NavButton key={n} aria-label={n}><Glyph name={n} size={12} /></NavButton>
            ))}
            <LayoutTabs>
              {['模型', '布局1', '布局2'].map((t, i) => (
                <LayoutTab key={t} $on={i === 0}>
                  <TabShape width="52" height="17" viewBox="0 0 52 17">
                    <path d="M0 0l6 14.500h34L47 0" fill={i === 0 ? '#212830' : '#fff'} stroke={i === 0 ? '#212830' : '#444'} />
                  </TabShape>
                  <TabText>{t}</TabText>
                </LayoutTab>
              ))}
            </LayoutTabs>
            <HScroll>
              <Splitter />
              <ScrollButton aria-label="向左"><Glyph name="left" size={14} /></ScrollButton>
              <Spacer />
              <Thumb />
              <ScrollButton aria-label="向右"><Glyph name="right" size={14} /></ScrollButton>
            </HScroll>
          </LayoutBar>
        </Viewport>
        <SideToolbar tools={modifyTools} label="修改" />
      </Main>

      <Command>
        <CommandSide>
          <CommandGrip />
          <CommandButton aria-label="关闭命令行"><Glyph name="close" size={12} /></CommandButton>
          <CommandButton aria-label="自定义命令行"><Glyph name="wrench" size={14} /></CommandButton>
        </CommandSide>
        <CommandBody>
          <History>{'命令: *取消*\n命令: *取消*'}</History>
          <Prompt>
            <Glyph name="prompt" size={14} />
            <Glyph name="smallcaret" size={12} />
            <PromptInput aria-label="命令" defaultValue="PASTEBLOCK" />
          </Prompt>
        </CommandBody>
      </Command>

      <StatusBar>
        <Coordinates>2729.8371, 1248.7077, 0.0000</Coordinates>
        {toggles.map(([t, on]) => (
          <Toggle key={t} $on={on} aria-label={t} aria-pressed={on}><Glyph name={t} /></Toggle>
        ))}
        <Gap $w={1} />
        <StatusRight>
          <Toggle $w={29}>模型</Toggle>
          <Toggle aria-label="布局"><Glyph name="paper" /></Toggle>
          <Toggle aria-label="快速查看"><Glyph name="qview" /></Toggle>
          <Gap $w={18} />
          <Toggle $w={54}><Glyph name="anno" />1:1<Glyph name="caret" size={14} /></Toggle>
          <Toggle aria-label="注释可见性"><Glyph name="annovis" /></Toggle>
          <Toggle aria-label="自动添加比例"><Glyph name="annoauto" /></Toggle>
          <Gap $w={6} />
          <Toggle aria-label="切换工作空间"><Glyph name="gear" /></Toggle>
          <Toggle aria-label="锁定"><Glyph name="lock" /></Toggle>
          <Toggle aria-label="硬件加速"><Glyph name="hw" /></Toggle>
          <Toggle $w={36} aria-label="隔离对象"><Pressed><Glyph name="bulb" /></Pressed></Toggle>
          <Toggle $w={12} aria-label="状态栏菜单"><Glyph name="caret" size={12} /></Toggle>
          <Toggle aria-label="全屏显示"><Glyph name="clean" /></Toggle>
          <Gap $w={17}><Glyph name="resize" /></Gap>
        </StatusRight>
      </StatusBar>

      <RedArrow width="92" height="64" viewBox="0 0 92 64">
        <path d="M1 61.700L10.300 45.700l4.400 2L90 .3l-3 3.500L17.300 54.300l1.700 3.500z" fill="#fb3b38" />
      </RedArrow>
    </Window>
  );
}
